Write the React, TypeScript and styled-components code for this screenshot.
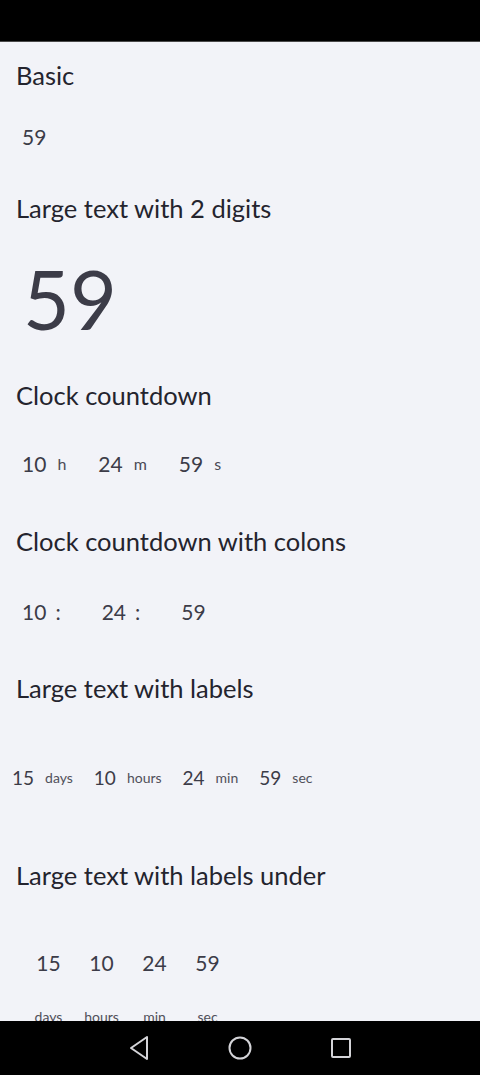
import React from 'react';
import styled, { createGlobalStyle } from 'styled-components';

const GlobalStyle = createGlobalStyle`
  html, body {
    margin: 0;
    padding: 0;
    background: #000;
  }
  body {
    font-family: Lato, "Noto Sans", sans-serif;
    -webkit-font-smoothing: antialiased;
  }
`;

type Unit = { value: string; label: string };

const clock: Unit[] = [
  { value: '10', label: 'h' },
  { value: '24', label: 'm' },
  { value: '59', label: 's' },
];

const full: Unit[] = [
  { value: '15', label: 'days' },
  { value: '10', label: 'hours' },
  { value: '24', label: 'min' },
  { value: '59', label: 'sec' },
];

const App = () => {
  return (
    <Screen>
      <GlobalStyle />
      <StatusBar />
      <Content>
        <Heading $top={17}>Basic</Heading>
        <Row $top={32} $left={22}>
          <Digits>59</Digits>
        </Row>

        <Heading $top={41}>Large text with 2 digits</Heading>
        <Row $top={33} $left={23}>
          <BigDigits>59</BigDigits>
        </Row>

        <Heading $top={38}>Clock countdown</Heading>
        <Row $top={39} $left={22} $gap={32}>
          {clock.map((u) => (
            <Unit key={u.label} $gap={11}>
              <Digits>{u.value}</Digits>
              <Suffix>{u.label}</Suffix>
            </Unit>
          ))}
        </Row>

        <Heading $top={47}>Clock countdown with colons</Heading>
        <Row $top={41} $left={22} $gap={41}>
          {clock.map((u, i) => (
            <Unit key={u.label} $gap={9}>
              <Digits>{u.value}</Digits>
              {i < clock.length - 1 && <Digits>:</Digits>}
            </Unit>
          ))}
        </Row>

        <Heading $top={46}>Large text with labels</Heading>
        <Row $top={60} $left={12} $gap={21}>
          {full.map((u) => (
            <Unit key={u.label} $gap={11}>
              <Digits $small>{u.value}</Digits>
              <Label>{u.label}</Label>
            </Unit>
          ))}
        </Row>

        <Heading $top={67}>Large text with labels under</Heading>
        <Row $top={58} $left={22}>
          {full.map((u) => (
            <Column key={u.label}>
              <Digits>{u.value}</Digits>
              <Label>{u.label}</Label>
            </Column>
          ))}
        </Row>
      </Content>
      <NavBar>
        <svg width="22" height="26" viewBox="0 0 22 26">
          <path
            d="M19 2 L3 13 L19 24 Z"
            fill="none"
            stroke="#d4d4d8"
            strokeWidth="2"
            strokeLinejoin="round"
          />
        </svg>
        <svg width="24" height="24" viewBox="0 0 24 24">
          <circle cx="12" cy="12" r="10.5" fill="none" stroke="#d4d4d8" strokeWidth="2" />
        </svg>
        <svg width="22" height="22" viewBox="0 0 22 22">
          <rect
            x="2"
            y="2"
            width="18"
            height="18"
            rx="1"
            fill="none"
            stroke="#d4d4d8"
            strokeWidth="2"
          />
        </svg>
      </NavBar>
    </Screen>
  );
};

export default App;

const Screen = styled.div`
  width: 480px;
  height: 1075px;
  display: flex;
  flex-direction: column;
  overflow: hidden;
  background: #000;
`;

const StatusBar = styled.div`
  height: 42px;
  flex-shrink: 0;
  background: #000;
  border-bottom: 1px solid #4a4a4a;
  box-sizing: border-box;
`;

const Content = styled.main`
  flex: 1;
  min-height: 0;
  overflow: hidden;
  background: #f2f3f8;
  padding: 0 16px;
  display: flex;
  flex-direction: column;
`;

const Heading = styled.h2<{ $top: number }>`
  margin: ${(p) => p.$top}px 0 0;
  font-size: 25.5px;
  line-height: 32px;
  font-weight: 400;
  color: #24242e;
  flex-shrink: 0;
`;

const Row = styled.div<{ $top: number; $left: number; $gap?: number }>`
  display: flex;
  align-items: center;
  gap: ${(p) => p.$gap ?? 0}px;
  margin: ${(p) => p.$top}px 0 0 ${(p) => p.$left - 16}px;
  flex-shrink: 0;
`;

const Unit = styled.div<{ $gap: number }>`
  display: flex;
  align-items: center;
  gap: ${(p) => p.$gap}px;
`;

const Digits = styled.span<{ $small?: boolean }>`
  font-size: ${(p) => (p.$small ? 19 : 21)}px;
  line-height: 28px;
  color: #3c3c48;
`;

const BigDigits = styled.span`
  font-size: 81px;
  line-height: 84px;
  color: #3c3c48;
`;

const Suffix = styled.span`
  font-size: 16px;
  line-height: 20px;
  color: #4a4a55;
`;

const Label = styled.span`
  font-size: 14px;
  line-height: 20px;
  color: #50505a;
`;

const Column = styled.div`
  width: 53px;
  display: flex;
  flex-direction: column;
  align-items: center;
  gap: 30px;
`;

const NavBar = styled.nav`
  height: 54px;
  flex-shrink: 0;
  background: #000;
  display: flex;
  align-items: center;
  justify-content: center;
  gap: 78px;
`;
